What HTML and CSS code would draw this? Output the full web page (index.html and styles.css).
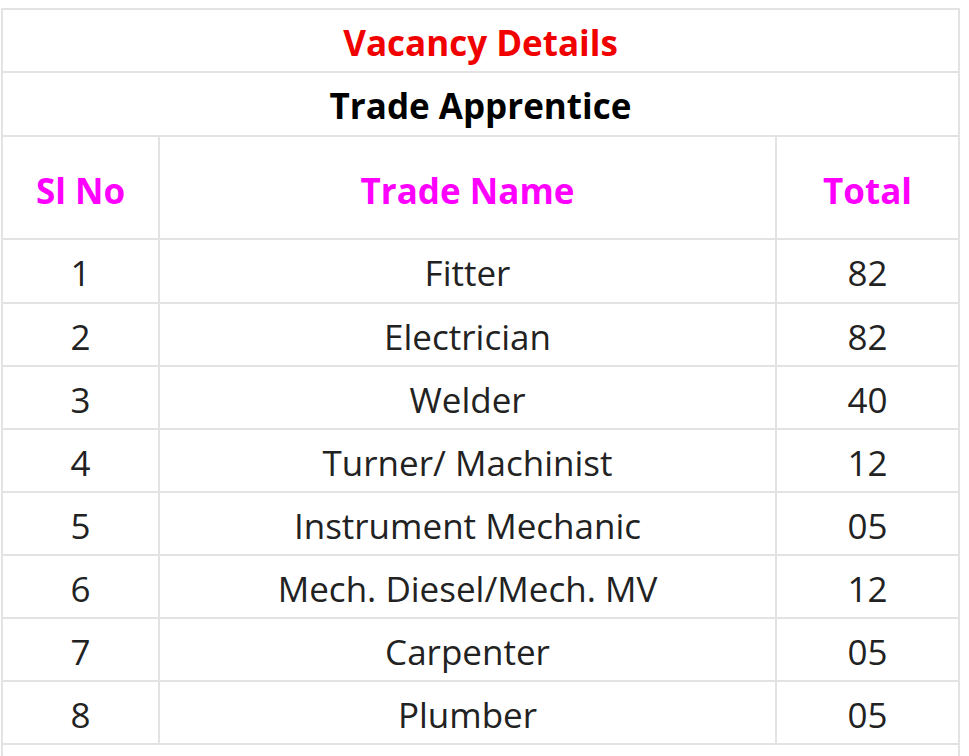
FILE: index.html
```html
<!DOCTYPE html>
<html>
<head>
<meta charset="utf-8">
<link rel="stylesheet" href="styles.css">
</head>
<body>
<table class="vacancy">
  <colgroup>
    <col class="c1">
    <col class="c2">
    <col class="c3">
  </colgroup>
  <tr><td colspan="3" class="title">Vacancy Details</td></tr>
  <tr class="sub-row"><td colspan="3" class="subtitle">Trade Apprentice</td></tr>
  <tr>
    <th>Sl No</th>
    <th>Trade Name</th>
    <th>Total</th>
  </tr>
  <tr class="tall"><td>1</td><td>Fitter</td><td>82</td></tr>
  <tr><td>2</td><td>Electrician</td><td>82</td></tr>
  <tr><td>3</td><td>Welder</td><td>40</td></tr>
  <tr><td>4</td><td>Turner/ Machinist</td><td>12</td></tr>
  <tr><td>5</td><td>Instrument Mechanic</td><td>05</td></tr>
  <tr><td>6</td><td>Mech. Diesel/Mech. MV</td><td>12</td></tr>
  <tr><td>7</td><td>Carpenter</td><td>05</td></tr>
  <tr><td>8</td><td>Plumber</td><td>05</td></tr>
  <tr class="tail"><td colspan="3"></td></tr>
</table>
</body>
</html>
```

FILE: styles.css
```css
html, body {
  margin: 0;
  padding: 0;
  background: #ffffff;
}
body {
  padding: 8px 0 0 1px;
  font-family: "Open Sans", "Noto Sans", sans-serif;
  color: #222222;
}
.vacancy {
  border-collapse: collapse;
  width: 957px;
  table-layout: fixed;
}
.c1 { width: 157px; }
.c2 { width: 617px; }
.c3 { width: 183px; }
.vacancy td, .vacancy th {
  border: 2px solid #e3e3e3;
  text-align: center;
  padding: 4px 0 0 0;
  font-size: 35px;
  font-weight: 400;
  height: 61px;
  line-height: 1.2;
  white-space: nowrap;
  box-sizing: border-box;
}
.vacancy .title {
  color: #f00000;
  font-weight: 700;
  height: 63px;
}
.vacancy .sub-row td {
  color: #000000;
  font-weight: 700;
  height: 64px;
}
.vacancy th {
  color: #ff00ff;
  font-weight: 700;
  height: 103px;
  padding-top: 6px;
}
.vacancy td {
  height: 63px;
}
.vacancy .tall td {
  height: 64px;
}
.vacancy .tail td {
  height: 14px;
  border-bottom: none;
}
```
